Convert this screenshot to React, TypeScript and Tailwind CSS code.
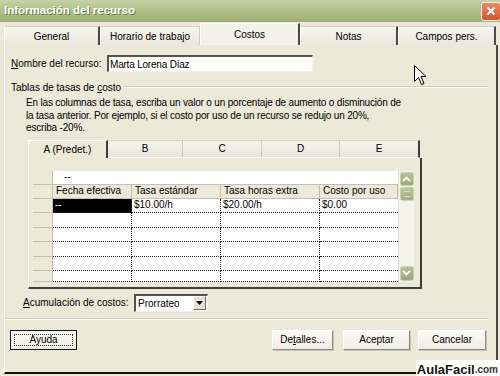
import React from "react";

function TopTab({ label, w, active, darkRight = true }: { label: string; w: number; active?: boolean; darkRight?: boolean }) {
  return (
    <div
      style={{ width: w }}
      className={
        "flex items-center justify-center border-t border-l text-black " +
        (active
          ? "h-[22px] bg-[#F2F1EA] border-[#FFFFFF] "
          : "h-[19px] bg-gradient-to-b from-[#F6F5F0] to-[#EAE8DC] border-t-[#D6D3C4] border-l-[#FFFFFF] ") +
        (darkRight ? "border-r-2 border-r-[#4A4A42]" : "border-r border-r-[#D0CDBE]")
      }
    >
      <span className={active ? "mt-[-1px]" : "mt-[1px]"}>{label}</span>
    </div>
  );
}

function SubTab({ label, w, active, last }: { label: string; w: number; active?: boolean; last?: boolean }) {
  return (
    <div
      style={{ width: w }}
      className={
        "h-[18px] flex items-center justify-center border-t " +
        (active
          ? "bg-[#ECE9D8] border-t-[#FFFFFF] border-l border-l-[#FFFFFF] border-r-2 border-r-[#3E3E38]"
          : "bg-gradient-to-b from-[#F5F4EE] to-[#E9E7DA] border-t-[#D8D5C6] border-b border-b-[#FFFFFF] " +
            (last ? "border-r-2 border-r-[#3E3E38]" : "border-r border-r-[#CFCBB9]"))
      }
    >
      {label}
    </div>
  );
}

const COLS = [79, 89, 99, 78];

function SelCell({ h }: { h: number }) {
  return (
    <div
      style={{ height: h }}
      className="w-[20px] shrink-0 bg-[#ECE9D8] border-r border-b border-[#C4C0AE]"
    />
  );
}

function DataRow({ h, values, first }: { h: number; values?: string[]; first?: boolean }) {
  return (
    <div className="flex" style={{ height: h }}>
      <SelCell h={h} />
      {COLS.map((w, i) => (
        <div
          key={i}
          style={{ width: w, height: h }}
          className={
            "shrink-0 border-b border-dotted border-b-[#222] pl-[2px] flex items-center leading-none " +
            (i < 3 ? "border-r border-r-[#222] " : "") +
            (first && i === 0 ? "bg-black text-white" : "bg-white text-black")
          }
        >
          {values ? values[i] : ""}
        </div>
      ))}
    </div>
  );
}

function Chevron({ up }: { up?: boolean }) {
  return (
    <svg width="9" height="6" viewBox="0 0 9 6">
      <path
        d={up ? "M1 5 L4.5 1.5 L8 5" : "M1 1 L4.5 4.5 L8 1"}
        fill="none"
        stroke="#ffffff"
        strokeWidth="1.8"
      />
    </svg>
  );
}

function Btn({ children, w, def }: { children: React.ReactNode; w: number; def?: boolean }) {
  return (
    <div
      style={{ width: w }}
      className={
        "h-[20px] flex items-center justify-center bg-gradient-to-b from-[#FBFAF6] to-[#EEEDE4] " +
        (def
          ? "border border-[#1A1A1A]"
          : "border border-t-[#FFFFFF] border-l-[#FFFFFF] border-r-[#8A887C] border-b-[#8A887C] shadow-[1px_1px_0_#C9C6B6]")
      }
    >
      {def ? (
        <div className="w-[calc(100%-6px)] h-[calc(100%-6px)] border border-dotted border-[#333] flex items-center justify-center">
          {children}
        </div>
      ) : (
        children
      )}
    </div>
  );
}

export default function App() {
  return (
    <div className="relative w-[500px] h-[376px] overflow-hidden bg-[#ECE9D8] text-[10px] text-black font-['Liberation_Sans',Arial,sans-serif] flex flex-col">
      {/* Title bar */}
      <div className="h-[22px] shrink-0 flex items-center justify-between bg-gradient-to-b from-[#C6D2A6] via-[#B0C08A] to-[#9DAF74] pl-[4px]">
        <span className="text-white font-bold text-[11.5px] [text-shadow:1px_1px_0_#6E7D4C]">
          Información del recurso
        </span>
        <div className="w-[20px] h-[19px] mr-[-1px] rounded-[3px] border border-[#F4F0E4] bg-gradient-to-b from-[#EE8A62] to-[#D2542C] flex items-center justify-center">
          <svg width="10" height="10" viewBox="0 0 10 10">
            <path d="M1.5 1.5 L8.5 8.5 M8.5 1.5 L1.5 8.5" stroke="#fff" strokeWidth="2" />
          </svg>
        </div>
      </div>

      {/* Top tabs */}
      <div className="h-[23px] shrink-0 flex items-end pl-[4px]">
        <TopTab label="General" w={96} />
        <TopTab label="Horario de trabajo" w={100} darkRight={false} />
        <TopTab label="Costos" w={100} active />
        <TopTab label="Notas" w={98} />
        <TopTab label="Campos pers." w={98} />
      </div>

      {/* Panel */}
      <div className="ml-[4px] w-[494px] h-[329px] shrink-0 border-l border-l-[#FFFFFF] border-r-2 border-r-[#4A4A42] border-b-2 border-b-[#111] bg-[#ECE9D8] flex flex-col">
        {/* Nombre */}
        <div className="mt-[10px] ml-[6px] h-[17px] flex items-center">
          <span className="w-[96px]">
            <span className="underline">N</span>ombre del recurso:
          </span>
          <div className="w-[206px] h-[17px] bg-white border-t-2 border-l-2 border-t-[#54544C] border-l-[#54544C] border-r border-b border-r-[#F2F1EA] border-b-[#F2F1EA] pl-[1px] flex items-center tracking-[-0.2px]">
            Marta Lorena Díaz
          </div>
        </div>

        {/* Group header */}
        <div className="mt-[9px] ml-[6px] mr-[8px] h-[12px] flex items-center">
          <span>
            Tablas de tasas de <span className="underline">c</span>osto
          </span>
          <div className="flex-1 ml-[3px] h-[2px] border-t border-t-[#CFCCBB] border-b border-b-[#FFFFFF]" />
        </div>

        {/* Paragraph */}
        <p className="mt-[4px] ml-[21px] leading-[12.5px] tracking-[-0.18px]">
          En las columnas de tasa, escriba un valor o un porcentaje de aumento o disminución de
          <br />
          la tasa anterior. Por ejemplo, si el costo por uso de un recurso se redujo un 20%,
          <br />
          escriba -20%.
        </p>

        {/* Sub tab control */}
        <div className="mt-[5px] ml-[23px] w-[394px] flex flex-col">
          <div className="flex">
            <SubTab label="A (Predet.)" w={80} active />
            <SubTab label="B" w={75} />
            <SubTab label="C" w={79} />
            <SubTab label="D" w={78} />
            <SubTab label="E" w={80} last />
          </div>
          <div className="h-[131px] border-l border-l-[#FFFFFF] border-r-2 border-r-[#3E3E38] border-b-2 border-b-[#3E3E38] pl-[4px] pt-[13px]">
            {/* Grid */}
            <div className="w-[381px] h-[111px] flex bg-white">
              <div className="w-[365px] flex flex-col">
                {/* edit row */}
                <div className="flex h-[14px]">
                  <SelCell h={14} />
                  <div className="flex-1 bg-white border-b border-[#C4C0AE] pl-[11px] flex items-center leading-none">
                    --
                  </div>
                </div>
                {/* header row */}
                <div className="flex h-[14px]">
                  <SelCell h={14} />
                  {["Fecha efectiva", "Tasa estándar", "Tasa horas extra", "Costo por uso"].map((t, i) => (
                    <div
                      key={t}
                      style={{ width: COLS[i] }}
                      className="shrink-0 h-[14px] bg-[#ECE9D8] border-r border-b border-[#C4C0AE] pl-[3px] flex items-center leading-none"
                    >
                      {t}
                    </div>
                  ))}
                </div>
                <DataRow h={14} first values={["--", "$10.00/h", "$20.00/h", "$0.00"]} />
                <DataRow h={15} />
                <DataRow h={14} />
                <DataRow h={15} />
                <DataRow h={14} />
                <DataRow h={11} />
              </div>
              {/* scrollbar */}
              <div className="w-[16px] h-[111px] bg-[#F5F3EA] border-l border-l-[#E2DFD0] flex flex-col items-center pt-[1px] pb-[1px]">
                <div className="w-[14px] h-[14px] rounded-[2px] bg-gradient-to-b from-[#B4C39A] to-[#98AA7C] border border-[#C9D3B4] flex items-center justify-center">
                  <Chevron up />
                </div>
                <div className="mt-[1px] w-[14px] h-[14px] rounded-[2px] bg-gradient-to-b from-[#B8C5A0] to-[#A0B086] border border-[#C9D3B4] flex items-center justify-center">
                  <div className="w-[6px] h-[6px] border-t border-b border-[#D6DEC6]" />
                </div>
                <div className="flex-1" />
                <div className="w-[14px] h-[15px] rounded-[2px] bg-gradient-to-b from-[#B4C39A] to-[#98AA7C] border border-[#C9D3B4] flex items-center justify-center">
                  <Chevron />
                </div>
              </div>
            </div>
          </div>
        </div>

        {/* Acumulación */}
        <div className="mt-[5px] ml-[18px] h-[18px] flex items-center">
          <span className="w-[111px]">
            <span className="underline">A</span>cumulación de costos:
          </span>
          <div className="w-[74px] h-[18px] bg-white border-t-2 border-l-2 border-t-[#54544C] border-l-[#54544C] border-r border-b border-r-[#F2F1EA] border-b-[#F2F1EA] flex items-center">
            <span className="pl-[2px] flex-1">Prorrateo</span>
            <div className="w-[13px] h-[14px] mr-[1px] bg-[#E4E2D6] border border-t-[#FFFFFF] border-l-[#FFFFFF] border-r-[#6E6C62] border-b-[#6E6C62] flex items-center justify-center">
              <svg width="7" height="4" viewBox="0 0 7 4">
                <path d="M0 0 L7 0 L3.5 4 Z" fill="#000" />
              </svg>
            </div>
          </div>
        </div>

        {/* Separator */}
        <div className="mt-[6px] mr-[8px] h-[2px] border-t border-t-[#CFCCBB] border-b border-b-[#FFFFFF]" />

        {/* Buttons */}
        <div className="mt-[10px] ml-[5px] mr-[10px] flex items-center">
          <Btn w={67} def>
            Ayuda
          </Btn>
          <div className="flex-1" />
          <Btn w={61}>
            <span>
              De<span className="underline">t</span>alles...
            </span>
          </Btn>
          <div className="w-[10px]" />
          <Btn w={67}>Aceptar</Btn>
          <div className="w-[8px]" />
          <Btn w={68}>Cancelar</Btn>
        </div>
      </div>

      {/* Mouse cursor overlay */}
      <svg className="absolute left-[414px] top-[65px]" width="13" height="21" viewBox="0 0 13 21">
        <path d="M0.5 0.5 L0.5 16.5 L4.5 12.5 L7.5 19.5 L10 18.5 L7 11.5 L12 11.5 Z" fill="#fff" stroke="#000" strokeWidth="1" />
      </svg>

      {/* Watermark overlay */}
      <div className="absolute right-0 bottom-0 w-[84px] h-[16px] bg-white flex items-end justify-end pr-[2px] leading-none">
        <span className="font-bold text-[13px] text-[#111]">AulaFacil</span>
        <span className="font-bold text-[10px] text-[#333] mb-[1px]">.com</span>
      </div>
    </div>
  );
}
